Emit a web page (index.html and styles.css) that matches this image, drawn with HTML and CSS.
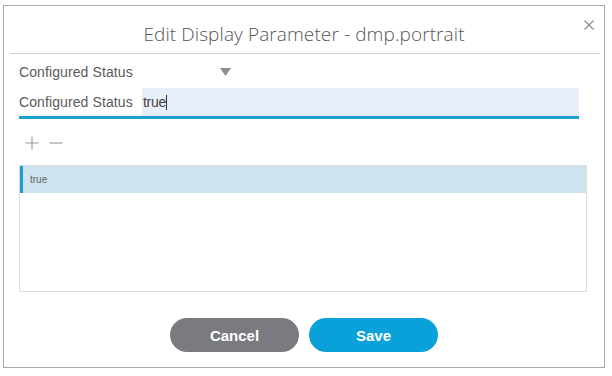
FILE: index.html
```html
<!DOCTYPE html>
<html>
<head>
<meta charset="utf-8">
<link rel="stylesheet" href="styles.css">
</head>
<body>
<div class="dialog">
  <div class="header">
    <h1 class="title">Edit Display Parameter - dmp.portrait</h1>
    <svg class="close" width="10" height="10" viewBox="0 0 10 10"><path d="M0.5 0.5 L9.5 9.5 M9.5 0.5 L0.5 9.5" stroke="#8a8a8a" stroke-width="1.1" fill="none"/></svg>
  </div>
  <div class="sep"></div>
  <div class="body">
    <div class="row-select">
      <span class="label">Configured Status</span>
      <svg class="caret" width="11" height="8" viewBox="0 0 11 8"><path d="M0 0 L11 0 L5.5 8 Z" fill="#8c8c8c"/></svg>
    </div>
    <div class="row-input">
      <span class="label">Configured Status</span>
      <div class="input"><span class="value">true</span><span class="cursor"></span></div>
    </div>
    <div class="underline"></div>
    <div class="tools">
      <svg width="14" height="14" viewBox="0 0 14 14"><path d="M7 0.5 V13.5 M0.5 7 H13.5" stroke="#9a9a9a" stroke-width="1.1" fill="none"/></svg>
      <svg width="14" height="14" viewBox="0 0 14 14"><path d="M0.5 7 H13.5" stroke="#9a9a9a" stroke-width="1.1" fill="none"/></svg>
    </div>
    <div class="list">
      <div class="item selected">true</div>
    </div>
  </div>
  <div class="footer">
    <button class="btn cancel">Cancel</button>
    <button class="btn save">Save</button>
  </div>
</div>
</body>
</html>
```
FILE: styles.css
```css
html, body {
  margin: 0;
  padding: 0;
  background: #fff;
}
body {
  font-family: "Liberation Sans", Arial, sans-serif;
  color: #555;
}
.dialog {
  margin: 5px 0 0 3px;
  width: 600px;
  height: 361px;
  border: 1px solid #a9a9a9;
  display: flex;
  flex-direction: column;
}
.header {
  position: relative;
  height: 47px;
  display: flex;
  align-items: center;
  justify-content: center;
}
.title {
  margin: 8px 0 0 0;
  font-family: "Open Sans", sans-serif;
  font-weight: 300;
  font-size: 19px;
  color: #555;
  letter-spacing: 0.1px;
}
.close {
  position: absolute;
  right: 10px;
  top: 14px;
}
.sep {
  height: 1px;
  background: #d0d0d0;
  margin: 0 4px 0 6px;
}
.body {
  padding: 0 17px 0 15px;
  display: flex;
  flex-direction: column;
}
.label {
  font-size: 14px;
  color: #5a5a5a;
  letter-spacing: 0.1px;
}
.row-select {
  height: 34px;
  display: flex;
  align-items: center;
  padding-top: 2px;
  box-sizing: border-box;
}
.caret {
  margin-left: 87px;
  margin-top: -1px;
}
.row-input {
  height: 28px;
  display: flex;
  align-items: center;
  margin-right: 8px;
}
.row-input .label {
  width: 123px;
  flex: none;
}
.input {
  flex: 1;
  height: 28px;
  background: #e9eff9;
  display: flex;
  align-items: center;
  padding-left: 1px;
}
.value {
  font-size: 14px;
  color: #444;
  letter-spacing: -0.3px;
}
.cursor {
  width: 1px;
  height: 15px;
  background: #333;
}
.underline {
  height: 3px;
  background: #1d9fd4;
  margin-right: 8px;
}
.tools {
  height: 46px;
  display: flex;
  align-items: center;
  gap: 10px;
  padding-left: 6px;
  padding-top: 2px;
  box-sizing: border-box;
}
.list {
  height: 125px;
  border: 1px solid #dcdcdc;
}
.item {
  height: 27px;
  display: flex;
  align-items: center;
  font-size: 10px;
  color: #666;
  padding-left: 10px;
}
.item.selected {
  background: #cfe3ee;
  border-left: 3px solid #1a9fd6;
  padding-left: 7px;
}
.footer {
  flex: 1;
  display: flex;
  justify-content: center;
  align-items: flex-start;
  gap: 10px;
  padding-top: 26px;
  box-sizing: border-box;
}
.btn {
  width: 129px;
  height: 34px;
  border: none;
  border-radius: 17px;
  color: #fff;
  font-family: "Liberation Sans", Arial, sans-serif;
  font-weight: bold;
  font-size: 15px;
  padding: 0;
}
.cancel {
  background: #7a7b80;
}
.save {
  background: #0aa0d9;
}
```
